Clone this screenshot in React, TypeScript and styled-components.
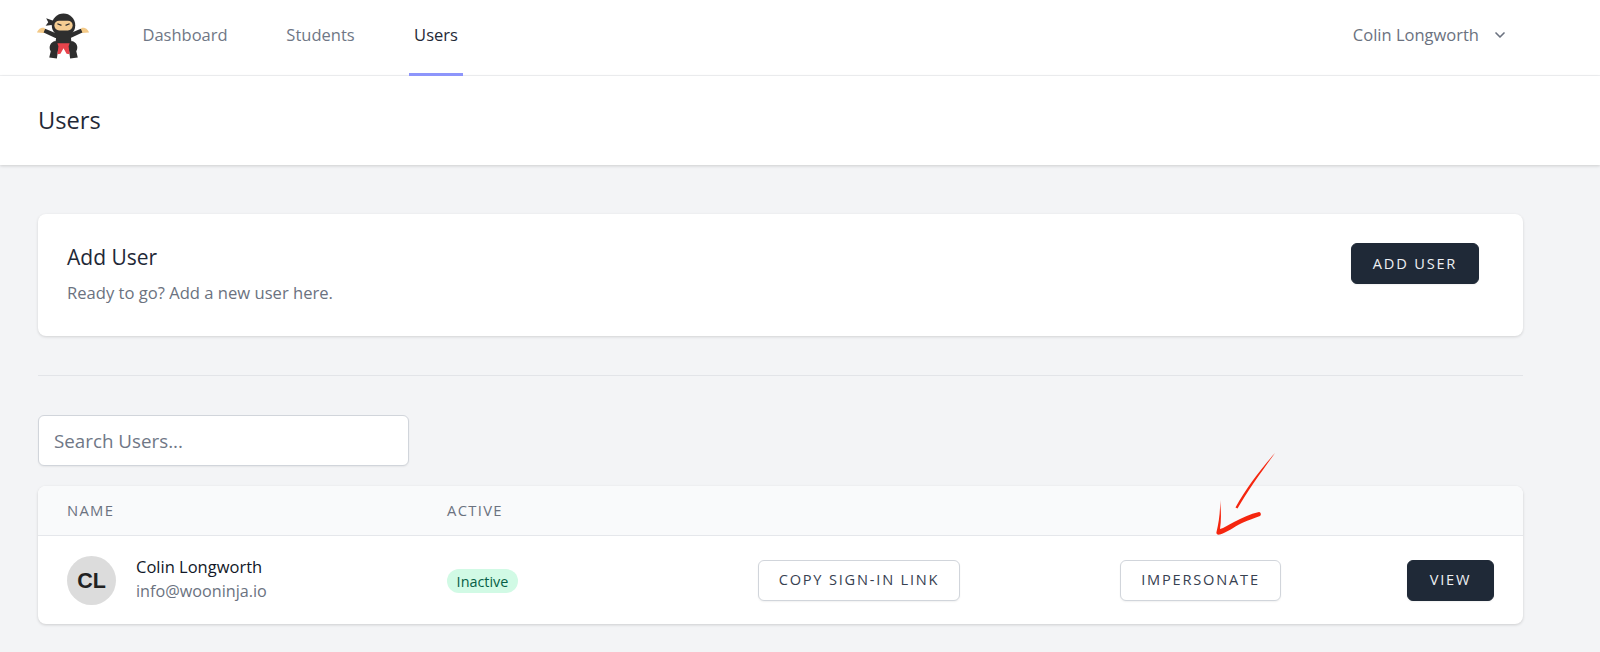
import React from "react";
import styled, { createGlobalStyle } from "styled-components";
import { ChevronDown } from "lucide-react";

const Global = createGlobalStyle`
  html, body { margin: 0; padding: 0; background: #f3f4f6; height: 652px; overflow: hidden; }
  * { box-sizing: border-box; }
  body { font-family: "Open Sans", "Noto Sans", "Liberation Sans", sans-serif; color: #1f2937; }
`;

const Page = styled.div`
  position: relative;
  height: 652px;
  overflow: hidden;
`;

const Nav = styled.nav`
  display: flex;
  align-items: stretch;
  height: 76px;
  background: #fff;
  border-bottom: 1px solid #f1f2f4;
  padding: 0 92px 0 37px;
`;

const LogoWrap = styled.div`
  width: 52px;
  display: flex;
  align-items: flex-start;
  padding-top: 13px;
  margin-right: 49px;
`;

const NavLinks = styled.div`
  display: flex;
  gap: 49px;
  flex: 1;
`;

const NavLink = styled.a<{ $active?: boolean; $width: number }>`
  display: flex;
  align-items: center;
  justify-content: center;
  width: ${(p) => p.$width}px;
  height: 76px;
  padding-bottom: 4px;
  font-size: 16.5px;
  color: ${(p) => (p.$active ? "#1f2937" : "#6f7786")};
  border-bottom: 3px solid ${(p) => (p.$active ? "#8d95fb" : "transparent")};
`;

const UserMenu = styled.div`
  display: flex;
  align-items: center;
  gap: 13px;
  font-size: 16.5px;
  color: #6b7280;
  padding-bottom: 6px;
`;

const Header = styled.header`
  height: 89px;
  background: #fff;
  display: flex;
  align-items: center;
  padding: 0 38px 2px;
  box-shadow: 0 1px 3px rgba(0, 0, 0, 0.16);
`;

const Title = styled.h1`
  margin: 0;
  font-size: 23.7px;
  font-weight: 400;
  color: #1f2937;
`;

const Main = styled.main`
  padding: 49px 77px 0 38px;
`;

const Card = styled.section`
  height: 122px;
  background: #fff;
  border-radius: 8px;
  box-shadow: 0 1px 3px rgba(0, 0, 0, 0.14);
  display: flex;
  align-items: flex-start;
  justify-content: space-between;
  padding: 29px 44px 0 29px;
`;

const CardTitle = styled.h2`
  margin: 0 0 11px;
  font-size: 21px;
  line-height: 28px;
  font-weight: 400;
  color: #1f2937;
`;

const CardText = styled.p`
  margin: 0;
  font-size: 16.6px;
  line-height: 22px;
  color: #6b7280;
`;

const Button = styled.button<{ $dark?: boolean; $width: number }>`
  width: ${(p) => p.$width}px;
  height: 41px;
  flex: none;
  border-radius: 6px;
  font-family: inherit;
  font-size: 14.6px;
  letter-spacing: 1.8px;
  text-transform: uppercase;
  padding: 0 0 2px;
  white-space: nowrap;
  color: ${(p) => (p.$dark ? "#eef0f3" : "#374151")};
  background: ${(p) => (p.$dark ? "#1f2937" : "#fff")};
  border: 1px solid ${(p) => (p.$dark ? "#1f2937" : "#d1d5db")};
  box-shadow: 0 1px 2px rgba(0, 0, 0, 0.06);
`;

const Divider = styled.hr`
  margin: 39px 0;
  border: 0;
  border-top: 1px solid #e2e4e8;
`;

const Search = styled.input`
  display: block;
  width: 371px;
  height: 51px;
  border: 1px solid #d1d5db;
  border-radius: 6px;
  background: #fff;
  padding: 0 15px;
  font-family: inherit;
  font-size: 18.8px;
  box-shadow: 0 1px 2px rgba(0, 0, 0, 0.06);
  &::placeholder { color: #6f7786; opacity: 1; }
`;

const Table = styled.section`
  margin-top: 20px;
  height: 138px;
  background: #fff;
  border-radius: 8px;
  overflow: hidden;
  box-shadow: 0 1px 3px rgba(0, 0, 0, 0.16);
`;

const HeadRow = styled.div`
  height: 50px;
  display: flex;
  align-items: center;
  padding: 0 0 1px 29px;
  background: #f9fafb;
  border-bottom: 1px solid #e5e7eb;
`;

const HeadCell = styled.div<{ $width?: number }>`
  width: ${(p) => (p.$width ? `${p.$width}px` : "auto")};
  font-size: 14.8px;
  letter-spacing: 1.3px;
  color: #6b7280;
  text-transform: uppercase;
`;

const Row = styled.div`
  height: 88px;
  display: flex;
  align-items: center;
  padding: 0 29px;
`;

const Person = styled.div`
  width: 380px;
  display: flex;
  align-items: center;
  gap: 20px;
`;

const Avatar = styled.div`
  width: 49px;
  height: 49px;
  padding-top: 2px;
  border-radius: 50%;
  background: #dcdcdc;
  color: #222;
  font-family: "Liberation Sans", sans-serif;
  font-weight: 700;
  font-size: 21.5px;
  display: flex;
  align-items: center;
  justify-content: center;
`;

const PersonText = styled.div`
  padding-bottom: 3px;
`;

const PersonName = styled.div`
  font-size: 16.5px;
  line-height: 25px;
  color: #111827;
`;

const PersonEmail = styled.div`
  font-size: 16.2px;
  line-height: 25px;
  color: #6b7280;
`;

const StatusCell = styled.div`
  width: 311px;
  display: flex;
  align-items: center;
  padding-top: 2px;
`;

const Badge = styled.span`
  width: 71px;
  height: 24px;
  border-radius: 12px;
  background: #d1fae5;
  color: #065f46;
  font-size: 14.4px;
  display: flex;
  align-items: center;
  justify-content: center;
`;

const Actions = styled.div`
  flex: 1;
  display: grid;
  grid-template-columns: 362px 287px auto;
  align-items: center;
`;

const Annotation = styled.svg`
  position: absolute;
  left: 1210px;
  top: 450px;
  width: 70px;
  height: 90px;
  pointer-events: none;
`;

const Ninja = () => (
  <svg width="53" height="46" viewBox="0 0 51 44" aria-label="logo">
    <path d="M7 14 C3 13.5 1 16 0 18.5 L7 19 L9 16 Z" fill="#f3c987" />
    <path d="M44 14 C48 13.5 50 16 51 18.5 L44 19 L42 16 Z" fill="#f3c987" />
    <path d="M6.5 18.5 L18 24 L33 24 L44.5 18.5 L43 15 L33 19 L18 19 L8 15 Z" fill="#2e2e2e" />
    <circle cx="26" cy="11.5" r="11.5" fill="#2e2e2e" />
    <path d="M16 7 L9 4.5 L11 8.5 L8.5 12 L16 11 Z" fill="#2e2e2e" />
    <rect x="17" y="7" width="18" height="9.5" rx="4.7" fill="#f5cd93" />
    <path d="M20 10 L24 11.6 M32 10 L28 11.6" stroke="#2e2e2e" strokeWidth="1.2" />
    <path d="M19 21 H33 L34 30 H18 Z" fill="#2e2e2e" />
    <path d="M18 27 C13 28 11 33 13.5 37 L12 43 L19.5 44 L20.5 37 L24 32 Z" fill="#2e2e2e" />
    <path d="M34 27 C39 28 41 33 38.5 37 L40 43 L32.5 44 L31.5 37 L28 32 Z" fill="#2e2e2e" />
    <path d="M20 29 H32 L31 32 L32 40 L29 39.5 L26 34 L23 39.5 L20 40 L21 32 Z" fill="#e8444c" />
  </svg>
);

export default function App() {
  return (
    <Page>
      <Global />
      <Nav>
        <LogoWrap><Ninja /></LogoWrap>
        <NavLinks>
          <NavLink $width={94}>Dashboard</NavLink>
          <NavLink $width={79}>Students</NavLink>
          <NavLink $width={54} $active>Users</NavLink>
        </NavLinks>
        <UserMenu>
          Colin Longworth
          <ChevronDown size={16} strokeWidth={2.5} color="#6b7280" />
        </UserMenu>
      </Nav>
      <Header>
        <Title>Users</Title>
      </Header>
      <Main>
        <Card>
          <div>
            <CardTitle>Add User</CardTitle>
            <CardText>Ready to go? Add a new user here.</CardText>
          </div>
          <Button $dark $width={128}>Add User</Button>
        </Card>
        <Divider />
        <Search placeholder="Search Users..." />
        <Table>
          <HeadRow>
            <HeadCell $width={380}>Name</HeadCell>
            <HeadCell>Active</HeadCell>
          </HeadRow>
          <Row>
            <Person>
              <Avatar>CL</Avatar>
              <PersonText>
                <PersonName>Colin Longworth</PersonName>
                <PersonEmail>info@wooninja.io</PersonEmail>
              </PersonText>
            </Person>
            <StatusCell><Badge>Inactive</Badge></StatusCell>
            <Actions>
              <Button $width={202}>Copy Sign-In Link</Button>
              <Button $width={161}>Impersonate</Button>
              <Button $dark $width={87}>View</Button>
            </Actions>
          </Row>
        </Table>
      </Main>
      <Annotation viewBox="0 0 70 90">
        <path d="M65 3 C50 20 36 38 25.5 57.5 L27.5 58.5 C38 40 52 21 65 3 Z" fill="#f5260f" />
        <path d="M10 50 C10.5 60 9 72 6.5 82 C6 84 7.5 85 10 84.5 C18 82 22 78 32 73 C38 70 45 68 50 66 C51.5 65 51 62 49 62 C40 64 32 68 24 72 C18 75 14 78 10 79 C11.5 70 11 60 10 50 Z" fill="#f5260f" />
      </Annotation>
    </Page>
  );
}
